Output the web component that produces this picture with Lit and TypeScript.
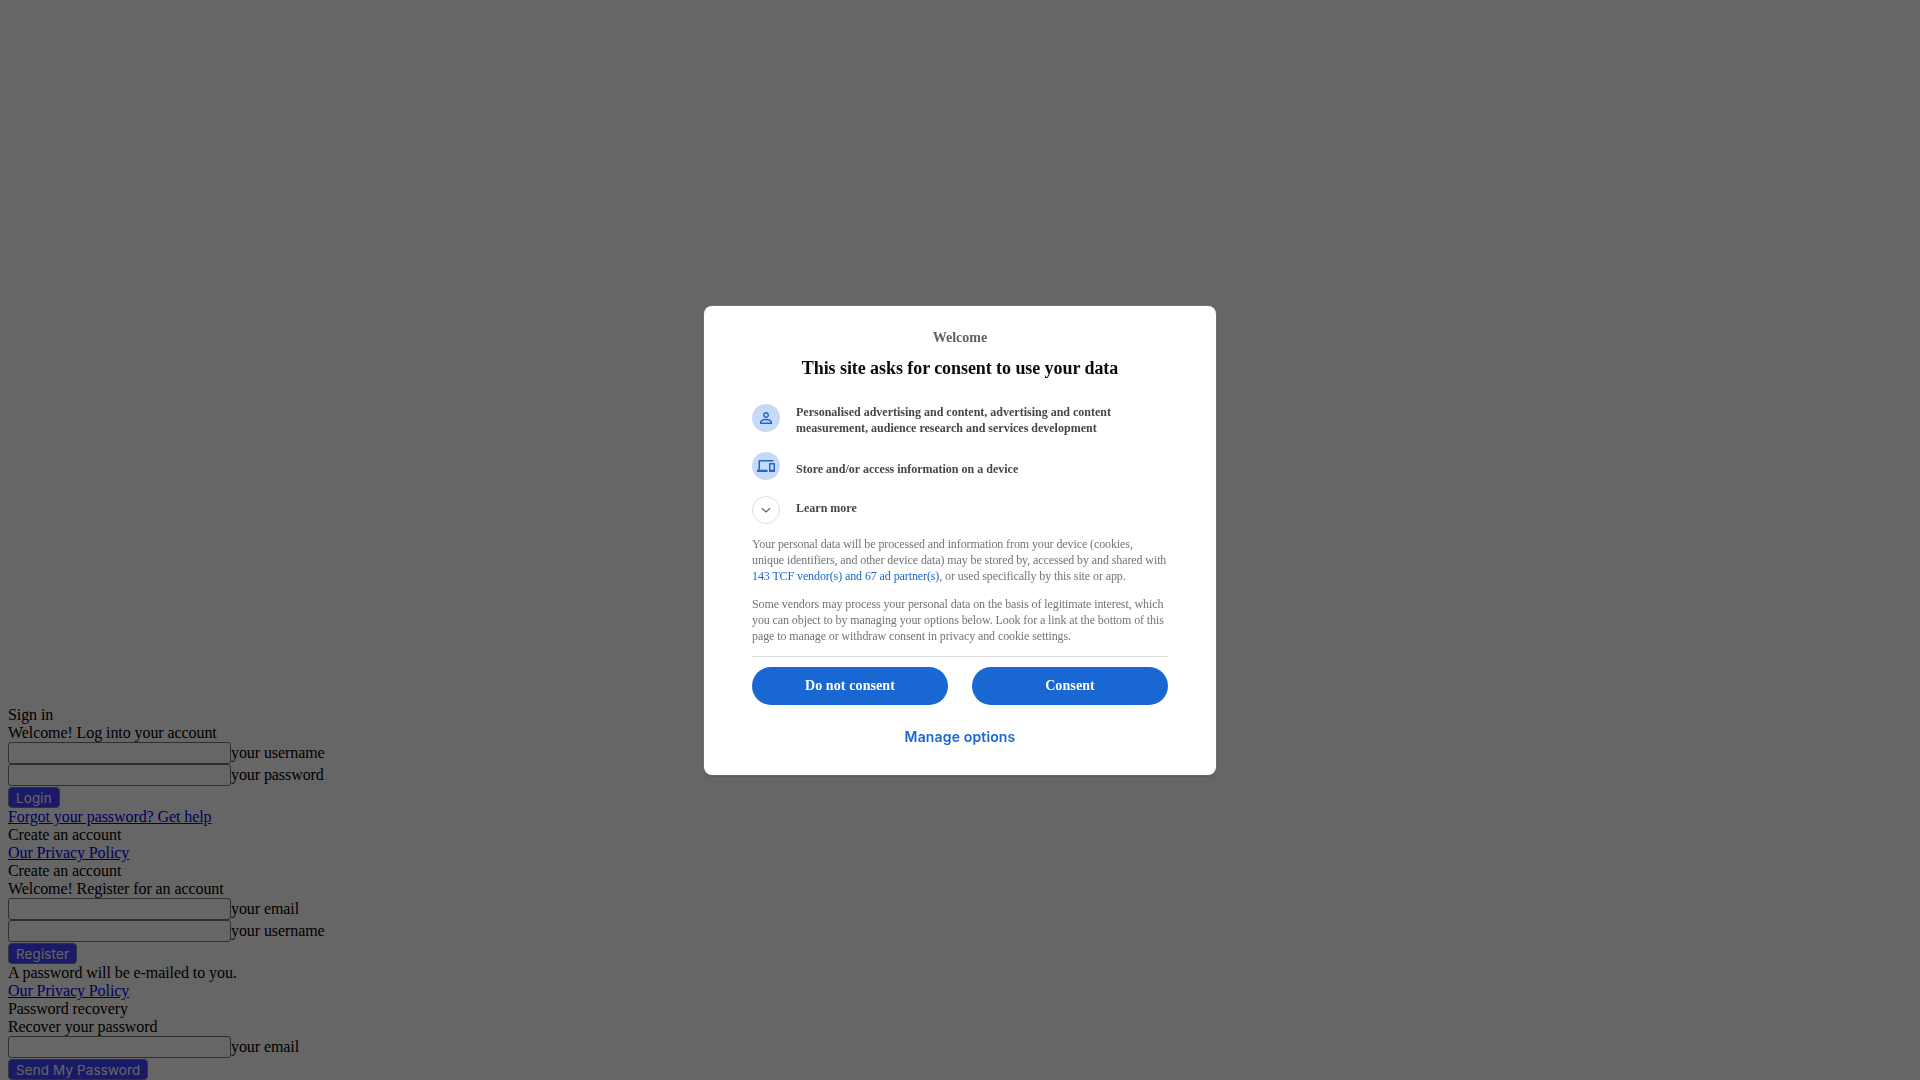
import {LitElement, html, css} from 'lit';
import {customElement} from 'lit/decorators.js';

@customElement('consent-dialog')
export class ConsentDialog extends LitElement {
  static styles = css`
    :host {
      display: block;
      width: 512px;
      box-sizing: border-box;
      background: #fff;
      border-radius: 8px;
      box-shadow: 0 1px 3px rgba(0, 0, 0, 0.3), 0 0 0 1px rgba(255, 255, 255, 0.15);
      padding: 23px 48px 0;
      font-family: 'Liberation Serif', serif;
      letter-spacing: 0;
      color: #5f6368;
    }
    .owner {
      text-align: center;
      font-size: 14px;
      font-weight: 700;
      line-height: 18px;
    }
    h1 {
      margin: 9px 0 0;
      text-align: center;
      font-size: 18px;
      line-height: 24px;
      font-weight: 700;
      letter-spacing: -0.07px;
      color: #0b0b0b;
    }
    .purposes {
      margin-top: 24px;
      display: flex;
      flex-direction: column;
    }
    .purpose {
      display: flex;
      gap: 16px;
      font-size: 12px;
      font-weight: 700;
      line-height: 16px;
      color: #444746;
    }
    .purpose.first {
      height: 48px;
    }
    .purpose.second {
      height: 44px;
    }
    .purpose.second span {
      padding-top: 9px;
    }
    .purpose.third {
      height: 40px;
    }
    .purpose.third span {
      padding-top: 4px;
    }
    .icon {
      flex: none;
      width: 28px;
      height: 28px;
      border-radius: 50%;
      background: #c6daf6;
      display: flex;
      align-items: center;
      justify-content: center;
      color: #1967d3;
    }
    .icon.more {
      box-sizing: border-box;
      background: #fff;
      border: 1px solid #dadce0;
      color: #5f6368;
    }
    p {
      margin: 0 1px 0 0;
      font-size: 12px;
      line-height: 16px;
      letter-spacing: -0.1px;
      color: #70757a;
    }
    p + p {
      margin-top: 12px;
    }
    a {
      color: #1967d3;
      text-decoration: none;
    }
    hr {
      margin: 12px 0 0;
      border: 0;
      height: 1px;
      background: #dadce0;
    }
    .actions {
      margin-top: 10px;
      display: flex;
      gap: 24px;
    }
    .actions button {
      flex: 1;
      height: 38px;
      border: 0;
      border-radius: 19px;
      background: #1967d3;
      color: #fff;
      font-family: 'Liberation Serif', serif;
      font-size: 14px;
      font-weight: 700;
      letter-spacing: 0.1px;
    }
    .manage {
      margin-top: 22px;
      padding-bottom: 28px;
      text-align: center;
      font-family: Inter, sans-serif;
      font-size: 14px;
      line-height: 20px;
      font-weight: 600;
      letter-spacing: 0.15px;
      color: #1967d3;
    }
  `;

  render() {
    return html`
      <div class="owner">Welcome</div>
      <h1>This site asks for consent to use your data</h1>
      <div class="purposes">
        <div class="purpose first">
          <div class="icon">
            <svg width="18" height="18" viewBox="0 0 24 24" fill="currentColor">
              <path d="M12 5.9a2.1 2.1 0 1 1 0 4.2 2.1 2.1 0 0 1 0-4.2m0 9c2.97 0 6.1 1.46 6.1 2.1v1.1H5.9V17c0-.64 3.13-2.1 6.1-2.1M12 4C9.79 4 8 5.79 8 8s1.79 4 4 4 4-1.79 4-4-1.79-4-4-4zm0 9c-2.67 0-8 1.34-8 4v3h16v-3c0-2.66-5.33-4-8-4z"/>
            </svg>
          </div>
          <span>Personalised advertising and content, advertising and content measurement, audience research and services development</span>
        </div>
        <div class="purpose second">
          <div class="icon">
            <svg width="18" height="18" viewBox="0 0 24 24" fill="currentColor">
              <path d="M4 6h18V4H4c-1.1 0-2 .9-2 2v11H0v3h14v-3H4V6zm19 2h-6c-.55 0-1 .45-1 1v10c0 .55.45 1 1 1h6c.55 0 1-.45 1-1V9c0-.55-.45-1-1-1zm-1 9h-4v-7h4v7z"/>
            </svg>
          </div>
          <span>Store and/or access information on a device</span>
        </div>
        <div class="purpose third">
          <div class="icon more">
            <svg width="12" height="12" viewBox="0 0 12 12" fill="none" stroke="currentColor" stroke-width="1.2">
              <path d="M2 4.2 6 8l4-3.8"/>
            </svg>
          </div>
          <span>Learn more</span>
        </div>
      </div>
      <div>
        <p>Your personal data will be processed and information from your device (cookies, unique identifiers, and other device data) may be stored by, accessed by and shared with <a href="#">143 TCF vendor(s) and 67 ad partner(s)</a>, or used specifically by this site or app.</p>
        <p>Some vendors may process your personal data on the basis of legitimate interest, which you can object to by managing your options below. Look for a link at the bottom of this page to manage or withdraw consent in privacy and cookie settings.</p>
      </div>
      <hr />
      <div class="actions">
        <button>Do not consent</button>
        <button>Consent</button>
      </div>
      <div class="manage">Manage options</div>
    `;
  }
}

@customElement('app-root')
export class AppRoot extends LitElement {
  static styles = css`
    :host {
      display: block;
      height: 1080px;
      overflow: hidden;
      box-sizing: border-box;
      padding: 706px 8px 0;
      background: #fff;
      font-family: 'Liberation Serif', serif;
      font-size: 16px;
      line-height: 18px;
      letter-spacing: -0.08px;
      color: #000;
    }
    a {
      display: block;
      color: #0000ee;
    }
    .field {
      display: flex;
      align-items: center;
      height: 22px;
    }
    .input {
      box-sizing: border-box;
      width: 223px;
      height: 22px;
      border: 1px solid #767676;
      border-radius: 3px;
      background: #fff;
    }
    .btn {
      display: block;
      margin-top: 1px;
      box-sizing: border-box;
      height: 21px;
      padding: 0 7px;
      border: 1px solid #7a7a9a;
      border-radius: 4px;
      background: #4242ff;
      color: #fff;
      font-family: Inter, sans-serif;
      font-size: 13.33px;
      letter-spacing: 0.2px;
    }
    .overlay {
      position: fixed;
      inset: 0;
      background: rgba(0, 0, 0, 0.6);
      display: flex;
      align-items: center;
      justify-content: center;
    }
  `;

  field(label: string) {
    return html`<div class="field"><div class="input"></div>${label}</div>`;
  }

  render() {
    return html`
      <div>Sign in</div>
      <div>Welcome! Log into your account</div>
      ${this.field('your username')}
      ${this.field('your password')}
      <button class="btn">Login</button>
      <a href="#">Forgot your password? Get help</a>
      <div>Create an account</div>
      <a href="#">Our Privacy Policy</a>
      <div>Create an account</div>
      <div>Welcome! Register for an account</div>
      ${this.field('your email')}
      ${this.field('your username')}
      <button class="btn">Register</button>
      <div>A password will be e-mailed to you.</div>
      <a href="#">Our Privacy Policy</a>
      <div>Password recovery</div>
      <div>Recover your password</div>
      ${this.field('your email')}
      <button class="btn">Send My Password</button>
      <div class="overlay"><consent-dialog></consent-dialog></div>
    `;
  }
}
